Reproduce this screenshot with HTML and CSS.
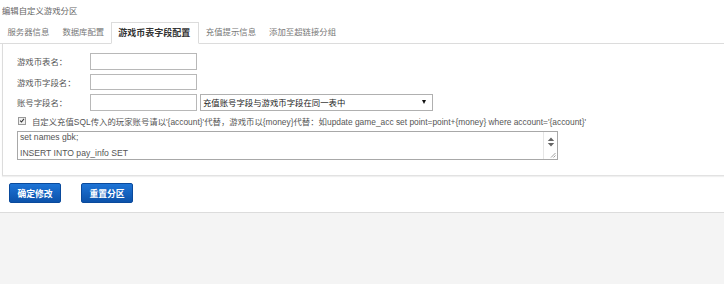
FILE: index.html
```html
<!DOCTYPE html>
<html>
<head>
<meta charset="utf-8">
<link rel="stylesheet" href="styles.css">
</head>
<body>
<div class="page">
  <div class="title">编辑自定义游戏分区</div>
  <div class="tabs">
    <div class="tab">服务器信息</div>
    <div class="tab">数据库配置</div>
    <div class="tab active">游戏币表字段配置</div>
    <div class="tab">充值提示信息</div>
    <div class="tab">添加至超链接分组</div>
  </div>
  <div class="panel">
    <div class="row">
      <span class="label">游戏币表名：</span>
      <span class="input"></span>
    </div>
    <div class="row">
      <span class="label">游戏币字段名：</span>
      <span class="input"></span>
    </div>
    <div class="row">
      <span class="label">账号字段名：</span>
      <span class="input"></span>
      <span class="select"><span class="select-text">充值账号字段与游戏币字段在同一表中</span><span class="arrow"></span></span>
    </div>
    <div class="check-row">
      <span class="checkbox"><svg width="8" height="8" viewBox="0 0 8 8"><path d="M1.5 4.2 L3.3 6 L6.6 1.8" fill="none" stroke="#333" stroke-width="1.4"/></svg></span>
      <span class="check-text">自定义充值SQL传入的玩家账号请以'{account}'代替，游戏币以{money}代替：如update game_acc set point=point+{money} where account='{account}'</span>
    </div>
    <div class="textarea">
      <div class="ta-text">
        <div class="ta-inner">set names gbk;<br>INSERT INTO pay_info SET</div>
      </div>
      <div class="ta-scroll">
        <svg class="spin" width="8" height="10" viewBox="0 0 8 10"><path d="M4 0.5 L7.2 4 L0.8 4 Z M0.8 6 L7.2 6 L4 9.5 Z" fill="#666"/></svg>
        <svg class="grip" width="6" height="6" viewBox="0 0 6 6"><path d="M5.5 1 L1 5.5 M5.5 3.5 L3.5 5.5" stroke="#888" stroke-width="0.8"/></svg>
      </div>
    </div>
  </div>
  <div class="actions">
    <span class="btn">确定修改</span>
    <span class="btn">重置分区</span>
  </div>
</div>
</body>
</html>
```

FILE: styles.css
```css
html, body {
  margin: 0;
  padding: 0;
  background: #f4f4f4;
  height: 100%;
}
body {
  font-family: "Liberation Sans", "Noto Sans CJK SC", sans-serif;
  font-size: 8.4px;
  color: #555;
  overflow: hidden;
}
.page {
  background: #fff;
  border-bottom: 1px solid #dcdcdc;
  height: 213px;
  box-sizing: border-box;
}
.title {
  height: 22px;
  line-height: 22px;
  padding-left: 2px;
  color: #666;
}
.tabs {
  display: flex;
  height: 21px;
  border-bottom: 1px solid #dcdcdc;
  padding-left: 1px;
}
.tab {
  padding: 0 6.5px;
  line-height: 21px;
  color: #777;
  white-space: nowrap;
}
.tab.active {
  box-sizing: border-box;
  height: 22px;
  line-height: 20px;
  border: 1px solid #dcdcdc;
  border-bottom-color: #fff;
  background: #fff;
  font-weight: bold;
  font-size: 9px;
  color: #333;
  padding: 0 8px 0 6.5px;
}
.panel {
  margin-left: 2px;
  border-left: 1px solid #dcdcdc;
  border-bottom: 1px solid #e2e2e2;
  box-shadow: 0 1px 1px #f0f0f0;
  height: 132px;
  box-sizing: border-box;
  padding: 9px 0 0 14px;
}
.row {
  display: flex;
  align-items: center;
  height: 16.5px;
  margin-bottom: 4px;
}
.label {
  width: 73px;
  color: #555;
}
.input {
  box-sizing: border-box;
  width: 107px;
  height: 16.5px;
  border: 1px solid #b8b8b8;
  background: #fff;
}
.select {
  box-sizing: border-box;
  margin-left: 3px;
  width: 233px;
  height: 16.5px;
  border: 1px solid #b0b0b0;
  display: flex;
  align-items: center;
  justify-content: space-between;
  padding: 0 5px 0 2px;
  color: #222;
}
.arrow {
  width: 0;
  height: 0;
  border-left: 2.5px solid transparent;
  border-right: 2.5px solid transparent;
  border-top: 4px solid #111;
  margin-right: 1px;
}
.check-row {
  display: flex;
  align-items: center;
  height: 12px;
  margin-top: 2.5px;
  padding-left: 1px;
}
.checkbox {
  box-sizing: border-box;
  width: 8px;
  height: 8px;
  border: 1px solid #999;
  background: #f0f0f0;
  display: flex;
  align-items: center;
  justify-content: center;
  margin-right: 6px;
}
.checkbox svg {
  width: 7px;
  height: 7px;
}
.check-text {
  color: #555;
  white-space: nowrap;
}
.textarea {
  box-sizing: border-box;
  margin-top: 4.5px;
  width: 541px;
  height: 29px;
  border: 1px solid #a8a8a8;
  display: flex;
  overflow: hidden;
}
.ta-text {
  flex: 1;
  overflow: hidden;
  padding-left: 2px;
  color: #555;
}
.ta-inner {
  line-height: 16px;
  margin-top: -3px;
  font-size: 8.6px;
}
.ta-scroll {
  width: 13px;
  border-left: 1px solid #e6e6e6;
  display: flex;
  flex-direction: column;
  align-items: center;
  justify-content: space-between;
}
.spin {
  margin-top: 5px;
}
.grip {
  align-self: flex-end;
  margin: 0 1px 1px 0;
}
.actions {
  display: flex;
  gap: 20px;
  padding: 7px 0 0 9px;
}
.btn {
  box-sizing: border-box;
  width: 52px;
  height: 20px;
  border-radius: 2px;
  border: 1px solid #0a4a9c;
  background: linear-gradient(#1e74d6, #0c52aa);
  color: #fff;
  font-weight: bold;
  font-size: 8.8px;
  display: flex;
  align-items: center;
  justify-content: center;
}
```
